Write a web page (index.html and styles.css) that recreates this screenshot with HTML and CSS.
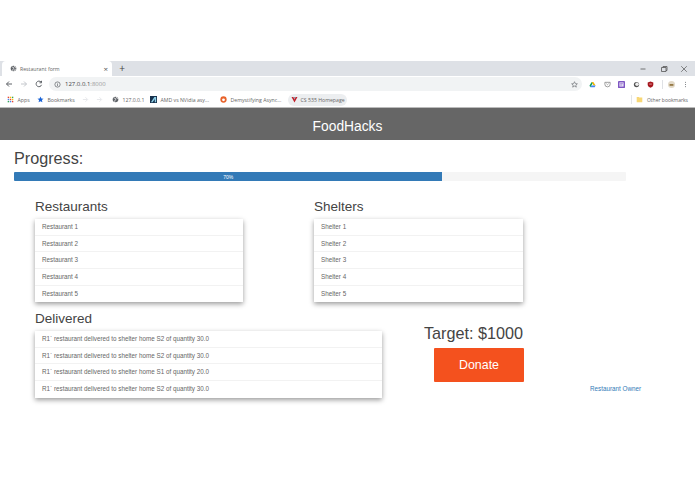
FILE: index.html
```html
<!DOCTYPE html>
<html lang="en">
<head>
<meta charset="utf-8">
<title>Restaurant form</title>
<link rel="stylesheet" href="styles.css">
</head>
<body>
<div class="browser">
  <div class="tabstrip">
    <div class="tab">
      <svg class="ic" viewBox="0 0 8 8"><circle cx="4" cy="4" r="3.2" fill="#5f6368"/><path d="M2 2.2l2 .6.4 1.4-1.2.8-.2 1.6M5 1.2l.4 1.2 1.6.4M4.8 6.8l.4-1.4 1.4-.6" stroke="#fff" stroke-width=".8" fill="none"/></svg>
      <span class="tab-title">Restaurant form</span>
      <span class="tab-close">×</span>
    </div>
    <span class="new-tab">+</span>
    <div class="winctl">
      <svg class="wc" viewBox="0 0 8 8"><path d="M1.5 4h5" stroke="#555" stroke-width=".8"/></svg>
      <svg class="wc" viewBox="0 0 8 8"><path d="M1.5 2.5h4.5v4h-4.500zM3 2.500v-1h4v4h-1" stroke="#555" stroke-width=".8" fill="none"/></svg>
      <svg class="wc" viewBox="0 0 8 8"><path d="M1.2 1.2l5.6 5.6M6.8 1.2l-5.6 5.6" stroke="#555" stroke-width=".7"/></svg>
    </div>
  </div>
  <div class="toolbar">
    <svg class="nav" viewBox="0 0 8 8"><path d="M7 4H1.5M4 1.5L1.5 4 4 6.5" stroke="#5f6368" fill="none"/></svg>
    <svg class="nav" viewBox="0 0 8 8"><path d="M1 4h5.5M4 1.5L6.5 4 4 6.5" stroke="#c4c7cc" fill="none"/></svg>
    <svg class="nav" viewBox="0 0 8 8"><path d="M6.6 4.8A2.8 2.8 0 1 1 6 2M6.5.8v2h-2" stroke="#5f6368" fill="none"/></svg>
    <div class="omnibox">
      <svg class="ic" viewBox="0 0 8 8"><circle cx="4" cy="4" r="3" stroke="#5f6368" stroke-width=".8" fill="none"/><path d="M4 3.5v2.2M4 2.2v.7" stroke="#5f6368" stroke-width=".8"/></svg>
      <span class="url">127.0.0.1<span class="port">:8000</span></span>
      <svg class="ic star" viewBox="0 0 8 8"><path d="M4 .8l1 2.2 2.3.2-1.8 1.5.6 2.3-2.1-1.2-2.1 1.2.6-2.3L.7 3.2 3 3z" stroke="#5f6368" stroke-width=".7" fill="none"/></svg>
    </div>
    <div class="ext">
      <svg class="ic" viewBox="0 0 8 8"><path d="M3 1h2l2.5 4.2H5.2z" fill="#f4b400"/><path d="M3 1L.5 5.4l1.1 1.8 2.5-4.4z" fill="#0f9d58"/><path d="M1.6 7.2h4.9l1-2H2.8z" fill="#4285f4"/></svg>
      <svg class="ic" viewBox="0 0 8 8"><path d="M1 1.5h6v2.2a3 3 0 0 1-6 0z" stroke="#777" stroke-width=".8" fill="none"/><path d="M2.7 3l1.3 1.2L5.3 3" stroke="#777" stroke-width=".7" fill="none"/></svg>
      <svg class="ic" viewBox="0 0 8 8"><rect width="8" height="8" rx="1" fill="#7e57c2"/><rect x="1.6" y="1.6" width="4.8" height="4.8" fill="#e6def5"/><path d="M2.500 3h3M2.500 4.600h2" stroke="#7e57c2" stroke-width=".7"/></svg>
      <svg class="ic" viewBox="0 0 8 8"><circle cx="4" cy="4" r="3" fill="#555"/><circle cx="4.6" cy="3.6" r="2" fill="#eee"/></svg>
      <svg class="ic" viewBox="0 0 8 8"><path d="M4 .6l3.2 1v2.600C7.200 6 5.400 7 4 7.600 2.600 7 .8 6 .8 4.200V1.600z" fill="#a5161d"/><path d="M2.500 3.500h3" stroke="#f3c9c9" stroke-width=".8"/></svg>
      <span class="ext-div"></span>
      <svg class="ic" viewBox="0 0 8 8"><circle cx="4" cy="4" r="4" fill="#e2d9c8"/><rect x="1.800" y="3.600" width="4.400" height="1.800" fill="#8a6a32"/></svg>
      <svg class="ic" viewBox="0 0 8 8"><path d="M4 1v1M4 3.500v1M4 6v1" stroke="#5f6368"/></svg>
    </div>
  </div>
  <div class="bookmarks">
    <span class="bm bm-apps"><svg class="ic" viewBox="0 0 8 8"><path d="M.8.8h1.600v1.600H.8z" fill="#ea4335"/><path d="M3.200.8h1.600v1.600H3.200z" fill="#fbbc05"/><path d="M5.600.8h1.600v1.600H5.600z" fill="#34a853"/><path d="M.8 3.200h1.600v1.600H.8z" fill="#4285f4"/><path d="M3.200 3.200h1.600v1.600H3.200z" fill="#ea4335"/><path d="M5.600 3.200h1.600v1.600H5.600z" fill="#fbbc05"/><path d="M.8 5.600h1.600v1.600H.8z" fill="#34a853"/><path d="M3.200 5.600h1.600v1.600H3.200z" fill="#4285f4"/><path d="M5.600 5.600h1.600v1.600H5.600z" fill="#ea4335"/></svg>Apps</span>
    <span class="bm bm-marks"><svg class="ic" viewBox="0 0 8 8"><path d="M4 .6l1 2.300 2.500.2-1.900 1.600.6 2.500L4 5.900 1.800 7.200l.6-2.500L.5 3.100 3 2.900z" fill="#1a63d6"/></svg>Bookmarks</span>
    <svg class="ic ghost" viewBox="0 0 8 8"><path d="M1 4h5M4 1.500L6.500 4 4 6.500" stroke="#e3e5e8" fill="none"/></svg>
    <svg class="ic ghost" viewBox="0 0 8 8"><path d="M1 4h5M4 1.500L6.500 4 4 6.500" stroke="#e3e5e8" fill="none"/></svg>
    <span class="bm bm-local"><svg class="ic" viewBox="0 0 8 8"><circle cx="4" cy="4" r="3.200" fill="#5f6368"/><path d="M2 2.200l2 .6.4 1.400-1.200.8-.2 1.600M5 1.200l.4 1.200 1.600.4" stroke="#fff" stroke-width=".8" fill="none"/></svg>127.0.0.1</span>
    <span class="bm bm-amd"><svg class="ic" viewBox="0 0 8 8"><rect width="8" height="8" fill="#17324d"/><path d="M1 7L5 1h2v6H5.500V3.500L3 7z" fill="#8fd0e8"/></svg>AMD vs NVidia asy...</span>
    <span class="bm bm-demy"><svg class="ic" viewBox="0 0 8 8"><circle cx="4" cy="4" r="3.600" fill="#e8622a"/><circle cx="4" cy="4.400" r="1.600" fill="#fff"/></svg>Demystifying Async...</span>
    <span class="bm bm-pill"><svg class="ic" viewBox="0 0 8 8"><path d="M.6 1h2.200L4 4l1.200-3h2.200L4 7.500z" fill="#c3202b"/><path d="M2.800 1h2.400L4 4z" fill="#8e99a6"/></svg>CS 535 Homepage</span>
    <span class="bm bm-other"><svg class="ic" viewBox="0 0 8 8"><path d="M.8 1h2.400l.6.8h3.400v5.400H.8z" fill="#f8d775"/></svg>Other bookmarks</span>
  </div>
</div>

<header class="navbar">FoodHacks</header>

<main class="page">
  <h1 class="progress-title">Progress:</h1>
  <div class="progress">
    <div class="progress-fill">70%</div>
  </div>

  <div class="row row-top">
    <section class="panel panel-narrow">
      <h2 class="panel-title">Restaurants</h2>
      <ul class="list">
        <li>Restaurant 1</li>
        <li>Restaurant 2</li>
        <li>Restaurant 3</li>
        <li>Restaurant 4</li>
        <li>Restaurant 5</li>
      </ul>
    </section>
    <section class="panel panel-narrow">
      <h2 class="panel-title">Shelters</h2>
      <ul class="list">
        <li>Shelter 1</li>
        <li>Shelter 2</li>
        <li>Shelter 3</li>
        <li>Shelter 4</li>
        <li>Shelter 5</li>
      </ul>
    </section>
  </div>

  <div class="row row-bottom">
    <section class="panel panel-wide">
      <h2 class="panel-title">Delivered</h2>
      <ul class="list">
        <li>R1` restaurant delivered to shelter home S2 of quantity 30.0</li>
        <li>R1` restaurant delivered to shelter home S2 of quantity 30.0</li>
        <li>R1` restaurant delivered to shelter home S1 of quantity 20.0</li>
        <li>R1` restaurant delivered to shelter home S2 of quantity 30.0</li>
      </ul>
    </section>
    <div class="target">
      <div class="target-text">Target: $1000</div>
      <a class="donate" href="#">Donate</a>
    </div>
    <a class="owner" href="#">Restaurant Owner</a>
  </div>
</main>
</body>
</html>
```

FILE: styles.css
```css
* { box-sizing: border-box; }
html, body { margin: 0; padding: 0; background: #fff; }
body { width: 695px; height: 494px; overflow: hidden; font-family: "Liberation Sans", Arial, sans-serif; color: #333; }

.browser { margin-top: 61px; font-family: "Open Sans", "Liberation Sans", sans-serif; color: #5f6368; }
.ic { width: 7px; height: 7px; flex: none; display: block; }

.tabstrip { height: 15px; background: #dee1e6; display: flex; align-items: stretch; }
.tab { width: 110px; margin-left: 2px; background: #fff; border-radius: 4px 4px 0 0; display: flex; align-items: center; padding-left: 8px; }
.tab-title { font-size: 5.2px; margin-left: 3px; flex: 1; color: #666; }
.tab-close { font-size: 8px; line-height: 1; margin-right: 4px; color: #555; }
.new-tab { width: 20px; text-align: center; font-size: 10px; line-height: 14px; color: #444; }
.winctl { margin-left: auto; display: flex; align-items: center; gap: 12.5px; padding-right: 7px; }
.wc { width: 8px; height: 8px; display: block; }

.toolbar { height: 16px; display: flex; align-items: center; padding-left: 5px; background: #fff; }
.nav { width: 8px; height: 8px; margin-right: 7px; display: block; }
.omnibox { width: 533px; margin-left: -1px; height: 14px; border-radius: 7px; background: #f1f3f4; display: flex; align-items: center; padding: 0 4px 0 5px; }
.url { margin-left: 4px; font-size: 6px; color: #444; flex: 1; }
.port { color: #999; }
.ext { display: flex; align-items: center; margin-left: 7px; gap: 7.5px; }
.ext-div { width: 1px; height: 9px; background: #dfe1e5; margin-right: -2.5px; }

.bookmarks { height: 16px; background: #fff; display: flex; align-items: center; padding-left: 7px; font-size: 5.2px; border-bottom: 1px solid #bbb; }
.bm { display: inline-flex; align-items: center; gap: 3.5px; white-space: nowrap; color: #666; }
.bm-apps { width: 30px; }
.bm-marks { width: 45px; }
.ghost { margin-right: 7px; }
.bm-local { width: 38px; margin-left: 2px; }
.bm-amd { width: 70px; }
.bm-demy { width: 68px; }
.bm-pill { height: 12px; width: 59px; border-radius: 6px; background: #eceef0; padding-left: 3px; gap: 2.5px; }
.bm-other { margin-left: auto; padding-right: 7px; gap: 4px; border-left: 1px solid #e3e5e8; padding-left: 4px; height: 9px; font-size: 5px; }

.navbar { height: 32px; background: #666; color: #fff; text-align: center; font-size: 13.8px; line-height: 37px; }

.page { padding: 0 0 0 14px; }
.progress-title { margin: 0; padding-top: 8px; padding-bottom: 1px; font-size: 16.2px; line-height: 21px; font-weight: 400; color: #444; }
.progress { width: 612px; height: 9px; margin-top: 2px; background: #f5f5f5; border-radius: 1px; overflow: hidden; }
.progress-fill { width: 70%; height: 100%; background: #337ab7; color: #fff; font-size: 5px; line-height: 10px; text-align: center; }

.row { display: flex; padding-left: 21px; align-items: flex-start; }
.row-top { margin-top: 16px; gap: 71px; }
.row-bottom { margin-top: 6.5px; }

.panel-title { margin: 0; padding-bottom: 2px; font-size: 13.5px; line-height: 20px; font-weight: 400; color: #444; }
.panel-narrow { width: 208px; }
.panel-narrow + .panel-narrow { width: 209px; }
.panel-wide { width: 347px; }

.list { list-style: none; margin: 0; padding: 0; background: #fff; box-shadow: 0 2px 5px rgba(0,0,0,.4); }
.list li { height: 16.7px; padding-left: 7px; font-size: 6.3px; line-height: 16.7px; color: #666; border-bottom: 1px solid #f2f2f2; white-space: nowrap; }
.list li:last-child { border-bottom: 0; }

.target { margin-left: 42px; margin-top: 14px; width: 100px; }
.target-text { font-size: 16.2px; line-height: 20px; color: #444; white-space: nowrap; }
.donate { display: block; width: 90px; height: 34px; margin: 5px 0 0 10px; background: #f4511e; border-radius: 1px; color: #fff; text-align: center; font-size: 12.4px; line-height: 35px; text-decoration: none; }

.owner { margin-left: 66px; margin-top: 76px; font-size: 6.3px; line-height: 8px; color: #337ab7; text-decoration: none; white-space: nowrap; }
```
